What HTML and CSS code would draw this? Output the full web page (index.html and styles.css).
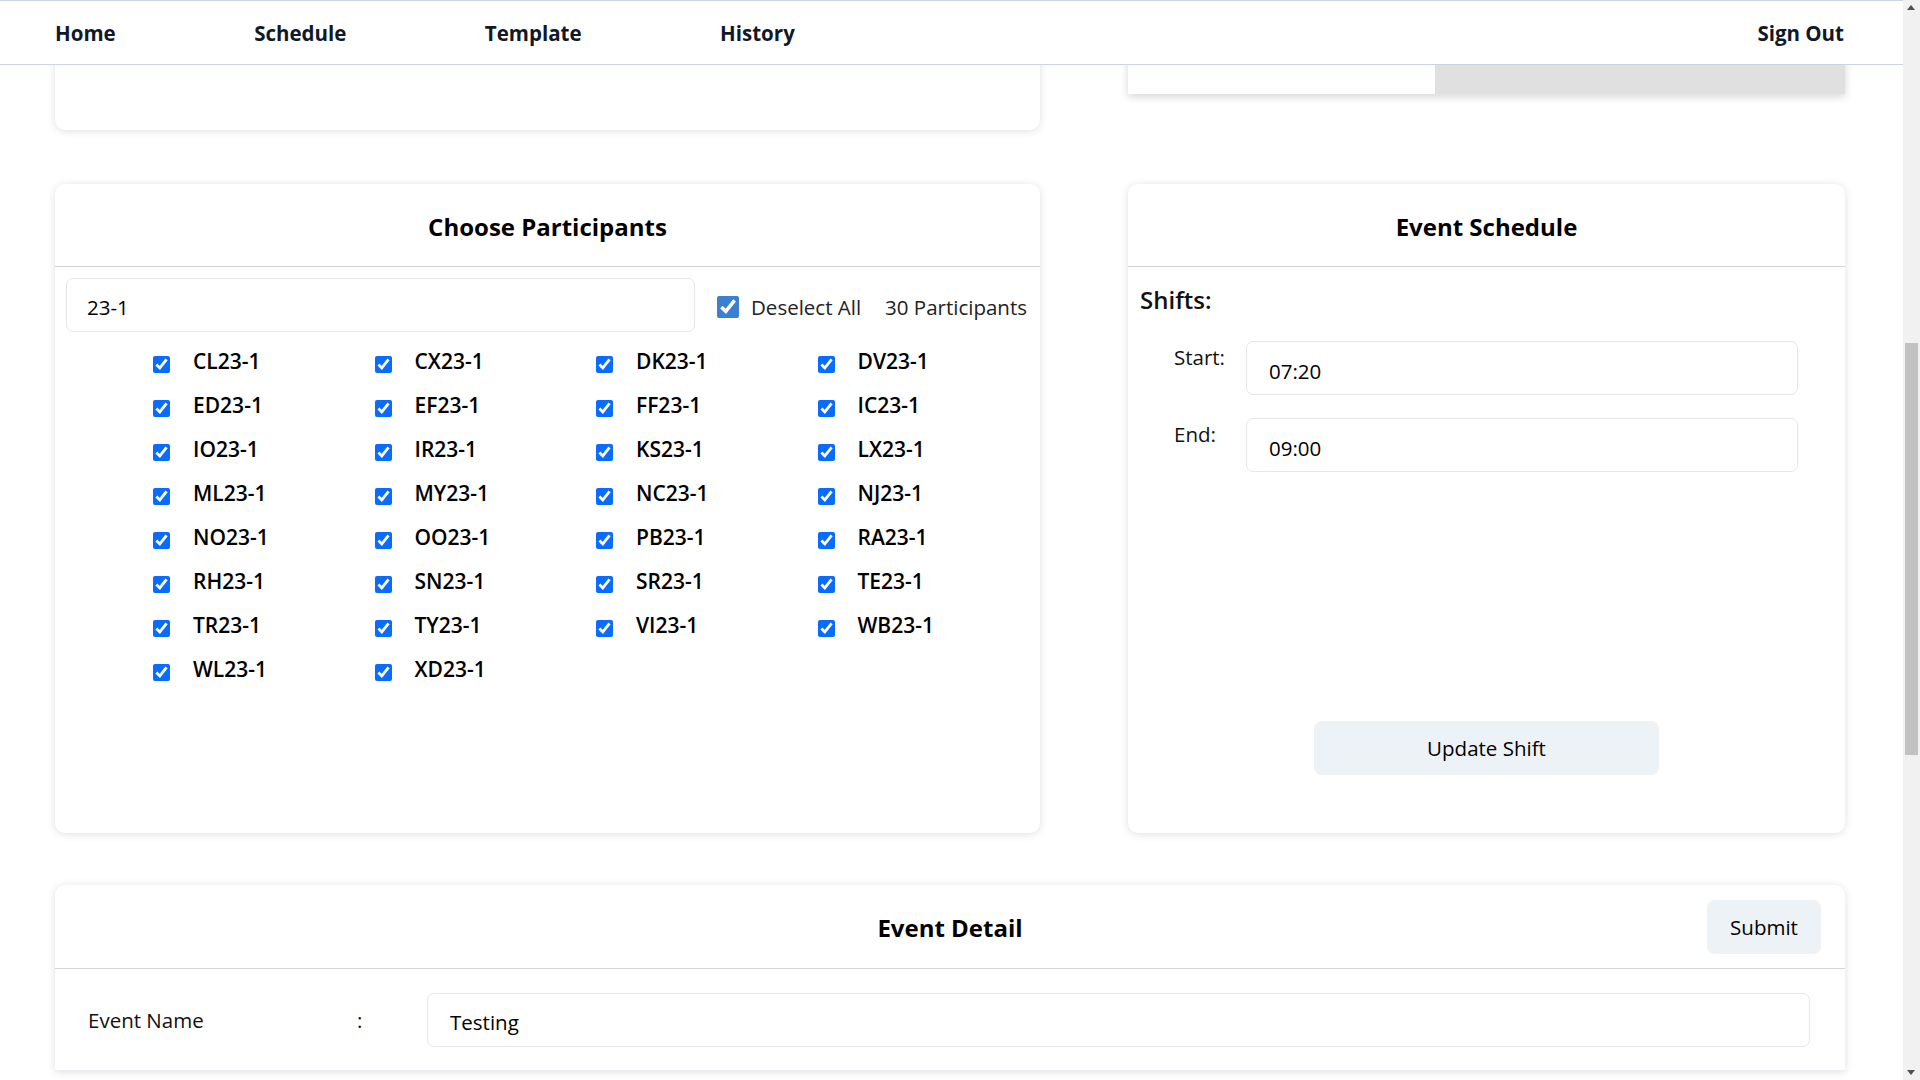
FILE: index.html
```html
<!DOCTYPE html>
<html lang="en">
<head>
<meta charset="utf-8">
<title>Event Schedule</title>
<link rel="stylesheet" href="styles.css">
</head>
<body>
<div class="viewport">
  <nav class="navbar">
    <a class="nav-link" href="#">Home</a>
    <a class="nav-link" href="#">Schedule</a>
    <a class="nav-link" href="#">Template</a>
    <a class="nav-link" href="#">History</a>
    <a class="nav-link nav-signout" href="#">Sign Out</a>
  </nav>

  <main class="page">
    <div class="row row-top">
      <div class="card top-left"></div>
      <div class="top-right">
        <div class="tr-white"></div>
        <div class="tr-gray"></div>
      </div>
    </div>

    <div class="row row-mid">
      <section class="card participants">
        <header class="card-head"><h2 class="card-title">Choose Participants</h2></header>
        <div class="search-row">
          <input class="text-input search-input" type="text" value="23-1">
          <label class="deselect"><input class="cb-big" type="checkbox" checked> Deselect All</label>
          <span class="count">30 Participants</span>
        </div>
        <div class="cb-grid">
          <label class="cb-item"><input class="cb" type="checkbox" checked><span>CL23-1</span></label>
          <label class="cb-item"><input class="cb" type="checkbox" checked><span>CX23-1</span></label>
          <label class="cb-item"><input class="cb" type="checkbox" checked><span>DK23-1</span></label>
          <label class="cb-item"><input class="cb" type="checkbox" checked><span>DV23-1</span></label>
          <label class="cb-item"><input class="cb" type="checkbox" checked><span>ED23-1</span></label>
          <label class="cb-item"><input class="cb" type="checkbox" checked><span>EF23-1</span></label>
          <label class="cb-item"><input class="cb" type="checkbox" checked><span>FF23-1</span></label>
          <label class="cb-item"><input class="cb" type="checkbox" checked><span>IC23-1</span></label>
          <label class="cb-item"><input class="cb" type="checkbox" checked><span>IO23-1</span></label>
          <label class="cb-item"><input class="cb" type="checkbox" checked><span>IR23-1</span></label>
          <label class="cb-item"><input class="cb" type="checkbox" checked><span>KS23-1</span></label>
          <label class="cb-item"><input class="cb" type="checkbox" checked><span>LX23-1</span></label>
          <label class="cb-item"><input class="cb" type="checkbox" checked><span>ML23-1</span></label>
          <label class="cb-item"><input class="cb" type="checkbox" checked><span>MY23-1</span></label>
          <label class="cb-item"><input class="cb" type="checkbox" checked><span>NC23-1</span></label>
          <label class="cb-item"><input class="cb" type="checkbox" checked><span>NJ23-1</span></label>
          <label class="cb-item"><input class="cb" type="checkbox" checked><span>NO23-1</span></label>
          <label class="cb-item"><input class="cb" type="checkbox" checked><span>OO23-1</span></label>
          <label class="cb-item"><input class="cb" type="checkbox" checked><span>PB23-1</span></label>
          <label class="cb-item"><input class="cb" type="checkbox" checked><span>RA23-1</span></label>
          <label class="cb-item"><input class="cb" type="checkbox" checked><span>RH23-1</span></label>
          <label class="cb-item"><input class="cb" type="checkbox" checked><span>SN23-1</span></label>
          <label class="cb-item"><input class="cb" type="checkbox" checked><span>SR23-1</span></label>
          <label class="cb-item"><input class="cb" type="checkbox" checked><span>TE23-1</span></label>
          <label class="cb-item"><input class="cb" type="checkbox" checked><span>TR23-1</span></label>
          <label class="cb-item"><input class="cb" type="checkbox" checked><span>TY23-1</span></label>
          <label class="cb-item"><input class="cb" type="checkbox" checked><span>VI23-1</span></label>
          <label class="cb-item"><input class="cb" type="checkbox" checked><span>WB23-1</span></label>
          <label class="cb-item"><input class="cb" type="checkbox" checked><span>WL23-1</span></label>
          <label class="cb-item"><input class="cb" type="checkbox" checked><span>XD23-1</span></label>
        </div>
      </section>

      <section class="card schedule">
        <header class="card-head"><h2 class="card-title">Event Schedule</h2></header>
        <div class="schedule-body">
          <h3 class="shifts">Shifts:</h3>
          <div class="shift-row">
            <label class="shift-label">Start:</label>
            <input class="text-input shift-input" type="text" value="07:20">
          </div>
          <div class="shift-row">
            <label class="shift-label">End:</label>
            <input class="text-input shift-input" type="text" value="09:00">
          </div>
        </div>
        <div class="schedule-foot">
          <button class="btn btn-update" type="button">Update Shift</button>
        </div>
      </section>
    </div>

    <section class="card detail">
      <header class="detail-head">
        <span></span>
        <h2 class="card-title">Event Detail</h2>
        <button class="btn btn-submit" type="button">Submit</button>
      </header>
      <div class="detail-row">
        <span class="detail-label">Event Name</span>
        <span class="detail-colon">:</span>
        <input class="text-input detail-input" type="text" value="Testing">
      </div>
    </section>
  </main>
</div>

<div class="scrollbar">
  <div class="sb-arrow sb-up"></div>
  <div class="sb-thumb"></div>
  <div class="sb-arrow sb-down"></div>
</div>
</body>
</html>
```

FILE: styles.css
```css
* { box-sizing: border-box; }

html, body {
  margin: 0;
  padding: 0;
  height: 1080px;
  overflow: hidden;
  background: #ffffff;
  font-family: "Open Sans", "Noto Sans", sans-serif;
  color: #000;
}

.viewport {
  width: 1903px;
  height: 1080px;
  overflow: hidden;
}

/* Navbar */
.navbar {
  position: relative;
  z-index: 2;
  display: flex;
  align-items: center;
  gap: 138.5px;
  height: 65px;
  padding: 0 59px 0 55px;
  background: #fff;
  border-top: 1px solid #cbd5e1;
  border-bottom: 1px solid #cbd5e1;
}

.nav-link {
  font-size: 20.5px;
  font-weight: 700;
  color: #111827;
  text-decoration: none;
  line-height: 28px;
}

.nav-signout { margin-left: auto; }

/* Page */
.page {
  width: 1790px;
  margin: 0 0 0 55px;
  padding: 0;
}

.row {
  display: grid;
  grid-template-columns: 985px 717px;
  column-gap: 88px;
}

.card {
  background: #fff;
  border-radius: 10px;
  box-shadow: 0 1px 8px rgba(0, 0, 0, 0.13);
}

.row-top {
  margin-top: -40px;
  align-items: start;
}

.top-left { height: 105px; }

.top-right {
  display: flex;
  height: 69px;
  box-shadow: 0 3px 8px rgba(0, 0, 0, 0.16);
}

.tr-white { width: 307px; background: #fff; }
.tr-gray { flex: 1; background: #e0e0e0; }

.row-mid {
  margin-top: 54px;
}

.row-mid .card {
  height: 649px;
  display: flex;
  flex-direction: column;
}

.card-head {
  height: 83px;
  display: flex;
  align-items: center;
  justify-content: center;
  padding-top: 4px;
  border-bottom: 1px solid #d4d4d8;
  flex-shrink: 0;
}

.card-title {
  margin: 0;
  font-size: 24px;
  font-weight: 700;
  line-height: 32px;
  color: #000;
}

/* Inputs */
.text-input {
  height: 54px;
  border: 1px solid #e5e7eb;
  border-radius: 7px;
  background: #fff;
  font-family: "Open Sans", "Noto Sans", sans-serif;
  font-size: 20.5px;
  color: #000;
  outline: none;
}

/* Participants */
.search-row {
  display: flex;
  align-items: center;
  padding: 11px 13px 0 11px;
}

.search-input {
  width: 629px;
  padding: 3px 20px 0;
  flex-shrink: 0;
}

.deselect {
  display: flex;
  align-items: center;
  margin-left: 22px;
  padding-top: 3px;
  font-size: 20.5px;
  color: #222;
  white-space: nowrap;
}

.cb-big {
  width: 22px;
  height: 22px;
  margin: 0 12px 0 0;
  accent-color: #3a7fd2;
}

.count {
  margin-left: auto;
  padding-top: 3px;
  font-size: 20.5px;
  color: #222;
  white-space: nowrap;
}

.cb-grid {
  display: grid;
  grid-template-columns: repeat(4, 221.5px);
  grid-auto-rows: 44px;
  padding: 7px 0 0 98px;
}

.cb-item {
  display: flex;
  align-items: center;
  font-size: 21px;
  font-weight: 600;
  color: #000;
}

.cb {
  width: 17px;
  height: 17px;
  margin: 6px 23px 0 0;
  flex-shrink: 0;
  accent-color: #0a6cff;
}

/* Schedule */
.schedule-body {
  flex: 1;
  display: flex;
  flex-direction: column;
  padding: 17px 47px 0 12px;
}

.shifts {
  margin: 0 0 25px 0;
  font-size: 24px;
  font-weight: 600;
  line-height: 32px;
  color: #111;
}

.shift-row {
  display: flex;
  align-items: flex-start;
  margin-bottom: 23px;
}

.shift-label {
  width: 106px;
  padding: 2px 0 0 34px;
  font-size: 20.5px;
  line-height: 28px;
  color: #111;
}

.shift-input {
  flex: 1;
  padding: 5px 22px 0;
}

.schedule-foot {
  display: flex;
  justify-content: center;
  padding-bottom: 58px;
}

.btn {
  border: none;
  border-radius: 8px;
  background: #edf2f7;
  font-family: "Open Sans", "Noto Sans", sans-serif;
  font-size: 20.5px;
  font-weight: 500;
  color: #000;
  cursor: pointer;
}

.btn-update {
  width: 345px;
  height: 54px;
}

/* Detail */
.detail {
  margin-top: 52px;
  border-bottom-left-radius: 0;
  border-bottom-right-radius: 0;
}

.detail-head {
  display: grid;
  grid-template-columns: 1fr auto 1fr;
  align-items: center;
  height: 84px;
  padding: 0 24px;
  border-bottom: 1px solid #d4d4d8;
}

.detail-head .card-title {
  padding-top: 3px;
}

.btn-submit {
  justify-self: end;
  width: 114px;
  height: 54px;
}

.detail-row {
  display: grid;
  grid-template-columns: 269px 70px 1fr;
  align-items: center;
  padding: 24px 35px 23px 33px;
  border-bottom: 1px solid #eceff3;
}

.detail-label {
  font-size: 20.5px;
  color: #111;
}

.detail-colon {
  font-size: 20.5px;
  color: #111;
}

.detail-input {
  width: 100%;
  padding: 4px 22px 0;
}

/* Fake browser scrollbar */
.scrollbar {
  position: fixed;
  top: 0;
  right: 0;
  width: 17px;
  height: 1080px;
  background: #f1f1f1;
}

.sb-thumb {
  position: absolute;
  top: 343px;
  left: 2px;
  width: 13px;
  height: 412px;
  background: #c1c1c1;
}

.sb-arrow {
  position: absolute;
  left: 4px;
  width: 0;
  height: 0;
  border-left: 4.5px solid transparent;
  border-right: 4.5px solid transparent;
}

.sb-up {
  top: 5px;
  border-bottom: 5px solid #505050;
}

.sb-down {
  bottom: 5px;
  border-top: 5px solid #505050;
}
```
